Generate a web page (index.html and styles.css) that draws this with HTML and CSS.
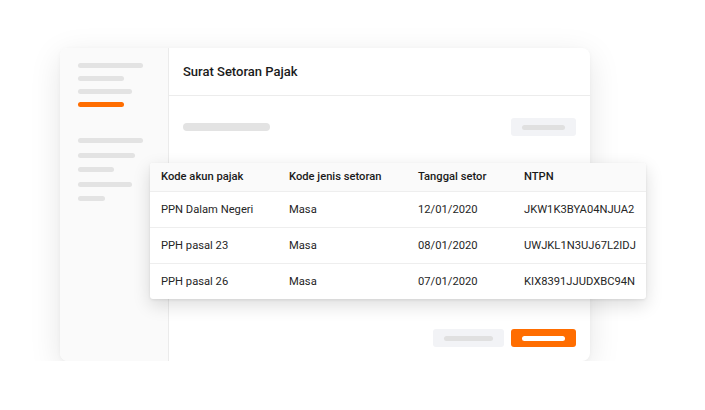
FILE: index.html
```html
<!DOCTYPE html>
<html lang="id">
  <head>
    <meta charset="UTF-8" />
    <meta name="viewport" content="width=device-width, initial-scale=1.0" />
    <title>Surat Setoran Pajak</title>
    <link rel="stylesheet" href="styles.css">
  </head>
  <body>
    <div class="stage">
      <!-- App window -->
      <div class="window">
        <!-- Sidebar skeleton -->
        <aside class="sidebar">
          <div class="nav-group">
            <span class="bar w65"></span>
            <span class="bar w46"></span>
            <span class="bar w54"></span>
            <span class="bar bar-active w46"></span>
          </div>
          <div class="nav-group">
            <span class="bar w65"></span>
            <span class="bar w57"></span>
            <span class="bar w36"></span>
            <span class="bar w54"></span>
            <span class="bar w27"></span>
          </div>
        </aside>

        <!-- Main panel -->
        <main class="main">
          <header class="main-header">
            <h1>Surat Setoran Pajak</h1>
          </header>
          <div class="toolbar">
            <span class="line line-title"></span>
            <span class="btn btn-light"><span class="btn-label"></span></span>
          </div>
          <div class="actions">
            <span class="btn btn-light btn-wide"><span class="btn-label"></span></span>
            <span class="btn btn-primary"><span class="btn-label"></span></span>
          </div>
        </main>

        <!-- Floating table card -->
        <div class="table-card">
          <table>
            <thead>
              <tr>
                <th class="c1">Kode akun pajak</th>
                <th class="c2">Kode jenis setoran</th>
                <th class="c3">Tanggal setor</th>
                <th class="c4">NTPN</th>
              </tr>
            </thead>
            <tbody>
              <tr>
                <td>PPN Dalam Negeri</td>
                <td>Masa</td>
                <td>12/01/2020</td>
                <td>JKW1K3BYA04NJUA2</td>
              </tr>
              <tr>
                <td>PPH pasal 23</td>
                <td>Masa</td>
                <td>08/01/2020</td>
                <td>UWJKL1N3UJ67L2IDJ</td>
              </tr>
              <tr>
                <td>PPH pasal 26</td>
                <td>Masa</td>
                <td>07/01/2020</td>
                <td>KIX8391JJUDXBC94N</td>
              </tr>
            </tbody>
          </table>
        </div>
      </div>
    </div>
  </body>
</html>
```

FILE: styles.css
```css
/* Global */
* {
  box-sizing: border-box;
}
body {
  margin: 0;
  background: #ffffff;
  font-family: Roboto, "Liberation Sans", sans-serif;
  color: #1f1f1f;
}
.stage {
  padding: 48px 0 0 60px;
}

/* Window */
.window {
  position: relative;
  display: flex;
  width: 530px;
  height: 313px;
  border-radius: 8px;
  background: #ffffff;
  box-shadow: 0 8px 32px rgba(0, 0, 0, 0.1), 0 1px 4px rgba(0, 0, 0, 0.04);
}

/* Sidebar */
.sidebar {
  width: 109px;
  flex-shrink: 0;
  padding: 15px 0 0 18px;
  background: #fafafa;
  border-right: 1px solid #ebebeb;
  border-radius: 8px 0 0 8px;
}
.nav-group {
  display: flex;
  flex-direction: column;
  gap: 8px;
  margin-bottom: 31px;
}
.nav-group + .nav-group {
  gap: 9.5px;
}
.bar {
  display: block;
  height: 5px;
  border-radius: 3px;
  background: #e3e3e3;
}
.bar-active {
  background: #ff6d00;
}
.w65 { width: 65px; }
.w57 { width: 57px; }
.w54 { width: 54px; }
.w46 { width: 46px; }
.w36 { width: 36px; }
.w27 { width: 27px; }

/* Main */
.main {
  flex: 1;
  display: flex;
  flex-direction: column;
}
.main-header {
  height: 48px;
  display: flex;
  align-items: center;
  padding: 0 14px;
  border-bottom: 1px solid #ececec;
}
.main-header h1 {
  margin: 0;
  font-size: 13px;
  font-weight: 500;
  color: #1a1a1a;
}
.toolbar {
  display: flex;
  align-items: center;
  justify-content: space-between;
  padding: 22px 14px 0 14px;
}
.line {
  display: block;
  height: 8px;
  border-radius: 4px;
  background: #e3e3e3;
}
.line-title {
  width: 87px;
}
.btn {
  display: flex;
  align-items: center;
  justify-content: center;
  width: 65px;
  height: 18px;
  border-radius: 3px;
}
.btn-wide {
  width: 71px;
}
.btn-light {
  background: #f2f3f6;
}
.btn-light .btn-label {
  width: 43px;
  height: 5px;
  border-radius: 3px;
  background: #e0e0e0;
}
.btn-wide .btn-label {
  width: 49px;
}
.btn-primary {
  background: #ff6d00;
}
.btn-primary .btn-label {
  width: 43px;
  height: 5px;
  border-radius: 3px;
  background: #ffffff;
}
.actions {
  margin-top: auto;
  display: flex;
  justify-content: flex-end;
  gap: 7px;
  padding: 0 14px 14px 0;
}

/* Floating table */
.table-card {
  position: absolute;
  left: 90px;
  top: 115px;
  width: 496px;
  background: #ffffff;
  border-radius: 3px;
  box-shadow: 0 6px 18px rgba(0, 0, 0, 0.14), 0 1px 3px rgba(0, 0, 0, 0.08);
  overflow: hidden;
}
table {
  width: 100%;
  border-collapse: collapse;
  font-size: 11.2px;
}
th {
  height: 28px;
  text-align: left;
  font-weight: 500;
  background: #fafafa;
  padding: 0 0 0 11px;
  color: #1a1a1a;
}
td {
  height: 36px;
  padding: 0 0 0 11px;
  border-top: 1px solid #eeeeee;
  color: #262626;
}
.c1 { width: 128px; }
.c2 { width: 129px; }
.c3 { width: 106px; }
```
